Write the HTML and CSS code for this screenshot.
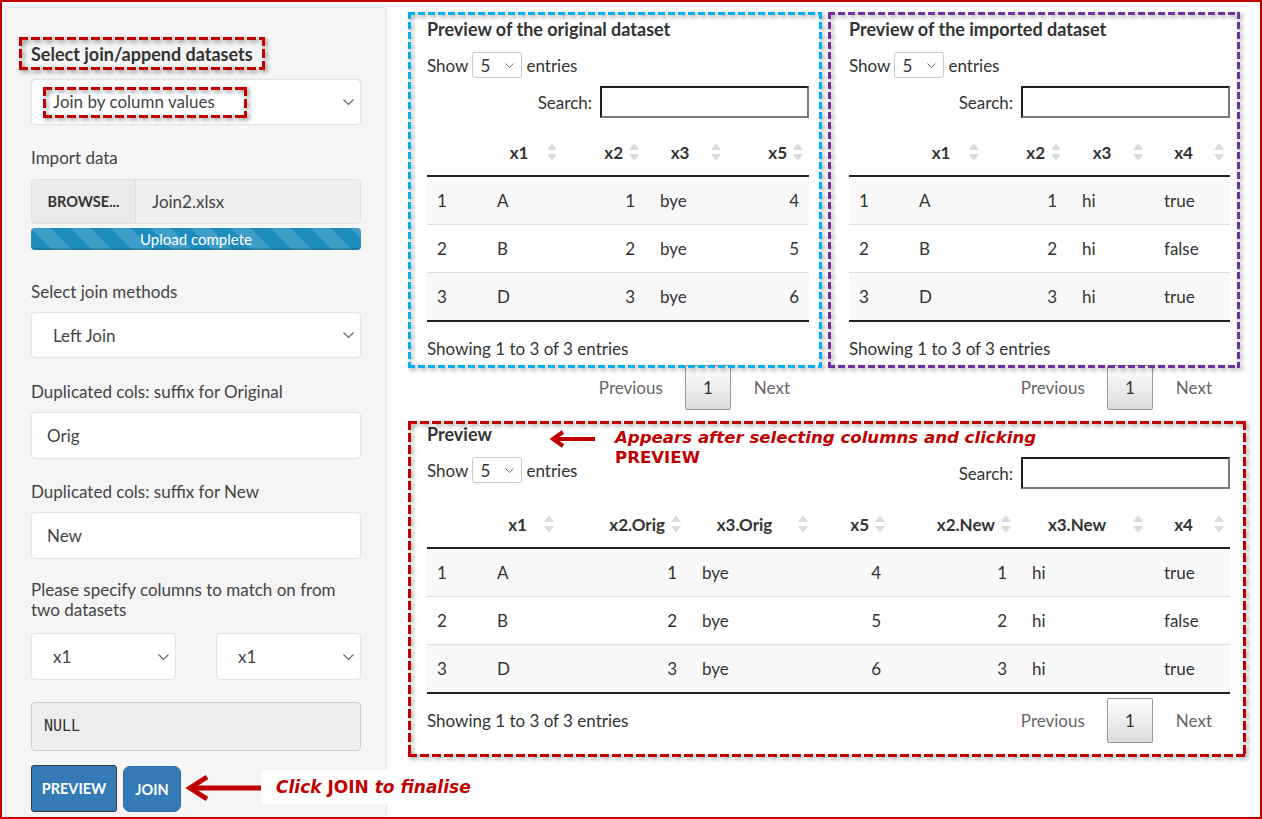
FILE: index.html
```html
<!DOCTYPE html>
<html>
<head>
<meta charset="utf-8">
<title>Join datasets</title>
<link rel="stylesheet" href="styles.css">
</head>
<body>
<div class="frame">
  <aside class="sidebar">
    <div class="title-label"><span class="anno-sm anno-label">Select join/append datasets</span></div>
    <div class="select sel-first"><span class="anno-sm anno-sel">Join by column values</span><svg class="chev" width="11" height="6" viewBox="0 0 11 6"><path d="M0.5 0.5 L5.5 5.5 L10.5 0.5" fill="none" stroke="#666" stroke-width="1.1"/></svg></div>
    <div class="lbl lbl-import">Import data</div>
    <div class="file"><span class="browse">BROWSE...</span><span class="fname">Join2.xlsx</span></div>
    <div class="progress">Upload complete</div>
    <div class="lbl lbl-method">Select join methods</div>
    <div class="select"><span>Left Join</span><svg class="chev" width="11" height="6" viewBox="0 0 11 6"><path d="M0.5 0.5 L5.5 5.5 L10.5 0.5" fill="none" stroke="#666" stroke-width="1.1"/></svg></div>
    <div class="lbl lbl-dup">Duplicated cols: suffix for Original</div>
    <div class="input">Orig</div>
    <div class="lbl lbl-dup2">Duplicated cols: suffix for New</div>
    <div class="input">New</div>
    <div class="lbl lbl-two">Please specify columns to match on from two datasets</div>
    <div class="pair">
      <div class="select small"><span>x1</span><svg class="chev" width="11" height="6" viewBox="0 0 11 6"><path d="M0.5 0.5 L5.5 5.5 L10.5 0.5" fill="none" stroke="#666" stroke-width="1.1"/></svg></div>
      <div class="select small"><span>x1</span><svg class="chev" width="11" height="6" viewBox="0 0 11 6"><path d="M0.5 0.5 L5.5 5.5 L10.5 0.5" fill="none" stroke="#666" stroke-width="1.1"/></svg></div>
    </div>
    <pre class="null">NULL</pre>
    <div class="buttons"><button class="btn btn-preview">PREVIEW</button><button class="btn btn-join">JOIN</button></div>
  </aside>

  <main class="main">
    <div class="top-row">
      <div class="col col1">
        <div class="box dash-blue box1">
          <div class="dt-title">Preview of the original dataset</div>
          <div class="show">Show <span class="len">5<svg class="chev-s" width="9" height="5" viewBox="0 0 9 5"><path d="M0.5 0.5 L4.5 4.5 L8.5 0.5" fill="none" stroke="#777" stroke-width="1"/></svg></span> entries</div>
          <div class="search">Search: <span class="search-input"></span></div>
          <table class="dt">
            <colgroup><col style="width:60px"><col style="width:76px"><col style="width:82px"><col style="width:82px"><col style="width:82px"></colgroup>
            <thead><tr><th class="rn"></th><th>x1<i class="sort"><svg width="10" height="18" viewBox="0 0 10 18"><path d="M0 7 L5 0 L10 7Z M0 11 L5 18 L10 11Z" fill="#dcdcdc"/></svg></i></th><th class="r">x2<i class="sort"><svg width="10" height="18" viewBox="0 0 10 18"><path d="M0 7 L5 0 L10 7Z M0 11 L5 18 L10 11Z" fill="#dcdcdc"/></svg></i></th><th>x3<i class="sort"><svg width="10" height="18" viewBox="0 0 10 18"><path d="M0 7 L5 0 L10 7Z M0 11 L5 18 L10 11Z" fill="#dcdcdc"/></svg></i></th><th class="r">x5<i class="sort"><svg width="10" height="18" viewBox="0 0 10 18"><path d="M0 7 L5 0 L10 7Z M0 11 L5 18 L10 11Z" fill="#dcdcdc"/></svg></i></th></tr></thead>
            <tbody>
              <tr><td class="c0">1</td><td class="c1">A</td><td class="r">1</td><td>bye</td><td class="r">4</td></tr>
              <tr><td class="c0">2</td><td class="c1">B</td><td class="r">2</td><td>bye</td><td class="r">5</td></tr>
              <tr><td class="c0">3</td><td class="c1">D</td><td class="r">3</td><td>bye</td><td class="r">6</td></tr>
            </tbody>
          </table>
          <div class="info">Showing 1 to 3 of 3 entries</div>
        </div>
        <div class="pager pager1"><span class="pg-prev">Previous</span><span class="pg-btn">1</span><span class="pg-next">Next</span></div>
      </div>
      <div class="col col2">
        <div class="box dash-purple box2">
          <div class="dt-title">Preview of the imported dataset</div>
          <div class="show">Show <span class="len">5<svg class="chev-s" width="9" height="5" viewBox="0 0 9 5"><path d="M0.5 0.5 L4.5 4.5 L8.5 0.5" fill="none" stroke="#777" stroke-width="1"/></svg></span> entries</div>
          <div class="search">Search: <span class="search-input"></span></div>
          <table class="dt">
            <colgroup><col style="width:60px"><col style="width:76px"><col style="width:82px"><col style="width:82px"><col style="width:81px"></colgroup>
            <thead><tr><th class="rn"></th><th>x1<i class="sort"><svg width="10" height="18" viewBox="0 0 10 18"><path d="M0 7 L5 0 L10 7Z M0 11 L5 18 L10 11Z" fill="#dcdcdc"/></svg></i></th><th class="r">x2<i class="sort"><svg width="10" height="18" viewBox="0 0 10 18"><path d="M0 7 L5 0 L10 7Z M0 11 L5 18 L10 11Z" fill="#dcdcdc"/></svg></i></th><th>x3<i class="sort"><svg width="10" height="18" viewBox="0 0 10 18"><path d="M0 7 L5 0 L10 7Z M0 11 L5 18 L10 11Z" fill="#dcdcdc"/></svg></i></th><th>x4<i class="sort"><svg width="10" height="18" viewBox="0 0 10 18"><path d="M0 7 L5 0 L10 7Z M0 11 L5 18 L10 11Z" fill="#dcdcdc"/></svg></i></th></tr></thead>
            <tbody>
              <tr><td class="c0">1</td><td class="c1">A</td><td class="r">1</td><td>hi</td><td>true</td></tr>
              <tr><td class="c0">2</td><td class="c1">B</td><td class="r">2</td><td>hi</td><td>false</td></tr>
              <tr><td class="c0">3</td><td class="c1">D</td><td class="r">3</td><td>hi</td><td>true</td></tr>
            </tbody>
          </table>
          <div class="info">Showing 1 to 3 of 3 entries</div>
        </div>
        <div class="pager pager2"><span class="pg-prev">Previous</span><span class="pg-btn">1</span><span class="pg-next">Next</span></div>
      </div>
    </div>

    <div class="box dash-red preview">
      <div class="dt-title">Preview</div>
      <svg class="note-arrow" width="46" height="18" viewBox="0 0 46 18"><path d="M4 9 H46" stroke="#c00000" stroke-width="4"/><path d="M14 2 L4 9 L14 16" fill="none" stroke="#c00000" stroke-width="4"/></svg>
      <div class="note note-preview">Appears after selecting columns and clicking<br><span class="up">PREVIEW</span></div>
      <div class="ctrl">
        <div class="show">Show <span class="len">5<svg class="chev-s" width="9" height="5" viewBox="0 0 9 5"><path d="M0.5 0.5 L4.5 4.5 L8.5 0.5" fill="none" stroke="#777" stroke-width="1"/></svg></span> entries</div>
        <div class="search">Search: <span class="search-input"></span></div>
      </div>
      <table class="dt dt-wide">
        <colgroup><col style="width:60px"><col style="width:73px"><col style="width:127px"><col style="width:127px"><col style="width:77px"><col style="width:126px"><col style="width:132px"><col style="width:81px"></colgroup>
        <thead><tr><th class="rn"></th><th>x1<i class="sort"><svg width="10" height="18" viewBox="0 0 10 18"><path d="M0 7 L5 0 L10 7Z M0 11 L5 18 L10 11Z" fill="#dcdcdc"/></svg></i></th><th class="r">x2.Orig<i class="sort"><svg width="10" height="18" viewBox="0 0 10 18"><path d="M0 7 L5 0 L10 7Z M0 11 L5 18 L10 11Z" fill="#dcdcdc"/></svg></i></th><th>x3.Orig<i class="sort"><svg width="10" height="18" viewBox="0 0 10 18"><path d="M0 7 L5 0 L10 7Z M0 11 L5 18 L10 11Z" fill="#dcdcdc"/></svg></i></th><th class="r">x5<i class="sort"><svg width="10" height="18" viewBox="0 0 10 18"><path d="M0 7 L5 0 L10 7Z M0 11 L5 18 L10 11Z" fill="#dcdcdc"/></svg></i></th><th class="r">x2.New<i class="sort"><svg width="10" height="18" viewBox="0 0 10 18"><path d="M0 7 L5 0 L10 7Z M0 11 L5 18 L10 11Z" fill="#dcdcdc"/></svg></i></th><th>x3.New<i class="sort"><svg width="10" height="18" viewBox="0 0 10 18"><path d="M0 7 L5 0 L10 7Z M0 11 L5 18 L10 11Z" fill="#dcdcdc"/></svg></i></th><th>x4<i class="sort"><svg width="10" height="18" viewBox="0 0 10 18"><path d="M0 7 L5 0 L10 7Z M0 11 L5 18 L10 11Z" fill="#dcdcdc"/></svg></i></th></tr></thead>
        <tbody>
          <tr><td class="c0">1</td><td class="c1">A</td><td class="r">1</td><td>bye</td><td class="r">4</td><td class="r">1</td><td>hi</td><td>true</td></tr>
          <tr><td class="c0">2</td><td class="c1">B</td><td class="r">2</td><td>bye</td><td class="r">5</td><td class="r">2</td><td>hi</td><td>false</td></tr>
          <tr><td class="c0">3</td><td class="c1">D</td><td class="r">3</td><td>bye</td><td class="r">6</td><td class="r">3</td><td>hi</td><td>true</td></tr>
        </tbody>
      </table>
      <div class="foot">
        <div class="info-inline">Showing 1 to 3 of 3 entries</div>
        <div class="pager pager3"><span class="pg-prev">Previous</span><span class="pg-btn">1</span><span class="pg-next">Next</span></div>
      </div>
    </div>
  </main>

  <svg class="join-arrow" width="78" height="28" viewBox="0 0 78 28"><path d="M5 14 H78" stroke="#c00000" stroke-width="5"/><path d="M22 3 L5 14 L22 25" fill="none" stroke="#c00000" stroke-width="5"/></svg>
  <div class="note note-join"><i>Click</i> JOIN <i>to finalise</i></div>
</div>
</body>
</html>
```

FILE: styles.css
```css
* { box-sizing: border-box; }
html, body { margin: 0; padding: 0; background: #fff; }
body {
  font-family: Lato, "Open Sans", "Liberation Sans", sans-serif;
  font-size: 17px;
  color: #333;
}

.frame {
  position: relative;
  width: 1262px;
  height: 819px;
  border: 2px solid #c00000;
  overflow: hidden;
  display: flex;
  align-items: flex-start;
  background: #fff;
}

/* ---------- sidebar ---------- */
.sidebar {
  flex: none;
  width: 382px;
  height: 840px;
  margin: 5px 0 0 3px;
  background: #f5f5f5;
  border: 1px solid #e3e3e3;
  border-radius: 4px;
  padding: 36px 25px 0 25px;
}

.title-label { font-weight: 700; font-size: 18px; line-height: 20px; color: #333; }

.anno-sm { position: relative; display: inline-block; }
.anno-sm::before {
  content: "";
  position: absolute;
  --c: #c00000;
  background:
    linear-gradient(90deg, var(--c) 9px, transparent 9px) 0 0 / 12px 3px repeat-x,
    linear-gradient(90deg, var(--c) 9px, transparent 9px) 0 100% / 12px 3px repeat-x,
    linear-gradient(180deg, var(--c) 9px, transparent 9px) 0 0 / 3px 12px repeat-y,
    linear-gradient(180deg, var(--c) 9px, transparent 9px) 100% 0 / 3px 12px repeat-y;
  filter: drop-shadow(2px 2px 2px rgba(0, 0, 0, 0.45));
  pointer-events: none;
}
.anno-label::before { left: -12px; right: -12px; top: -7px; bottom: -6px; }
.anno-sel { line-height: 20px; }
.anno-sel::before { left: -10px; right: -32px; top: -5px; bottom: -6px; }

.select {
  position: relative;
  display: flex;
  align-items: center;
  height: 46px;
  background: #fff;
  border: 1px solid #e4e4e4;
  border-radius: 4px;
  padding-left: 21px;
  color: #444;
  box-shadow: 0 0 2px rgba(0, 0, 0, 0.06);
}
.sel-first { margin-top: 15px; }
.chev { margin-left: auto; margin-right: 6px; flex: none; }

.lbl { line-height: 20px; color: #444; margin-bottom: 10px; }
.lbl-import { margin-top: 23px; margin-bottom: 11px; }
.lbl-method { margin-top: 32px; }
.lbl-dup { margin-top: 24px; }
.lbl-dup2 { margin-top: 23px; }
.lbl-two { margin-top: 21px; margin-bottom: 13px; }

.file {
  display: flex;
  height: 45px;
  border: 1px solid #e0e0e0;
  border-radius: 4px;
  background: #efefef;
  overflow: hidden;
}
.browse {
  flex: none;
  width: 104px;
  display: flex;
  align-items: center;
  justify-content: center;
  background: #ebebeb;
  border-right: 1px solid #dedede;
  font-weight: 700;
  font-size: 14.5px;
  color: #333;
}
.fname { display: flex; align-items: center; padding-left: 16px; color: #444; }

.progress {
  margin-top: 4px;
  height: 22px;
  border-radius: 4px;
  background-color: #1d8dbf;
  background-image: linear-gradient(45deg, rgba(255,255,255,.15) 25%, transparent 25%, transparent 50%, rgba(255,255,255,.15) 50%, rgba(255,255,255,.15) 75%, transparent 75%, transparent);
  background-size: 40px 40px;
  box-shadow: inset 0 -2px 0 rgba(0, 0, 0, 0.15);
  color: #fff;
  font-size: 15px;
  line-height: 22px;
  text-align: center;
}

.input {
  display: flex;
  align-items: center;
  height: 47px;
  background: #fff;
  border: 1px solid #e4e4e4;
  border-radius: 4px;
  padding-left: 15px;
  color: #444;
  box-shadow: 0 0 2px rgba(0, 0, 0, 0.06);
}

.pair { display: flex; justify-content: space-between; }
.select.small { width: 145px; height: 47px; }

.null {
  margin: 22px 0 0;
  height: 49px;
  background: #eee;
  border: 1px solid #ccc;
  border-radius: 4px;
  padding: 0 12px;
  font-family: "DejaVu Sans Mono", "Liberation Mono", monospace;
  font-size: 15px;
  line-height: 47px;
  color: #333;
}

.buttons { display: flex; gap: 6px; margin-top: 14px; align-items: flex-end; }
.btn {
  height: 46px;
  background: #337ab7;
  color: #fff;
  border: 1px solid #2e6da4;
  border-radius: 7px;
  font-family: inherit;
  font-weight: 700;
  font-size: 14.5px;
  padding: 0;
}
.btn-preview { width: 86px; height: 47px; border: 1px solid #3a3a3a; border-radius: 3px; }
.btn-join { width: 58px; }

/* ---------- main ---------- */
.main { flex: none; width: 838px; margin: 10px 0 0 21px; }
.top-row { display: flex; gap: 6px; }
.col1 { width: 414px; }
.col2 { width: 412px; }

.box { position: relative; }
.box::before {
  content: "";
  position: absolute;
  inset: 0;
  background:
    linear-gradient(90deg, var(--c) var(--d), transparent var(--d)) 0 0 / var(--p) 3px repeat-x,
    linear-gradient(90deg, var(--c) var(--d), transparent var(--d)) 0 100% / var(--p) 3px repeat-x,
    linear-gradient(180deg, var(--c) var(--d), transparent var(--d)) 0 0 / 3px var(--p) repeat-y,
    linear-gradient(180deg, var(--c) var(--d), transparent var(--d)) 100% 0 / 3px var(--p) repeat-y;
  filter: drop-shadow(2px 2px 2px rgba(0, 0, 0, 0.4));
  pointer-events: none;
  z-index: 2;
}
.dash-blue { --c: #00b0f0; --d: 7px; --p: 10px; }
.dash-purple { --c: #7030a0; --d: 7px; --p: 10px; }
.dash-red { --c: #c00000; --d: 9px; --p: 12px; }

.box1 { padding: 6px 13px 7px 19px; }
.box2 { padding: 6px 10px 7px 21px; }

.dt-title { font-weight: 700; font-size: 18px; line-height: 22px; color: #333; }

.show { display: flex; align-items: center; gap: 4px; height: 26px; margin-top: 12px; color: #333; }
.len {
  display: flex;
  align-items: center;
  width: 50px;
  height: 26px;
  background: #fff;
  border: 1px solid #c8c8c8;
  border-radius: 3px;
  padding-left: 7px;
}
.chev-s { margin-left: auto; margin-right: 7px; }

.search { display: flex; justify-content: flex-end; align-items: center; gap: 8px; height: 32px; margin-top: 8px; }
.search-input {
  display: block;
  width: 209px;
  height: 32px;
  background: #fff;
  border: 2px solid;
  border-color: #1e1e1e #7a7a7a #7a7a7a #1e1e1e;
}

.dt {
  width: 100%;
  table-layout: fixed;
  border-collapse: separate;
  border-spacing: 0;
  margin-top: 12px;
  color: #333;
}
.dt th {
  position: relative;
  font-weight: 700;
  padding: 10px 22px 10px 10px;
  line-height: 25px;
  border-bottom: 2px solid #222;
  text-align: center;
  white-space: nowrap;
}
.dt th.r { text-align: right; }
.sort { position: absolute; right: 6px; top: 50%; margin-top: -10px; line-height: 0; }
.dt td {
  padding: 11.5px 10px 11.5px 15px;
  line-height: 24px;
  border-top: 1px solid #ddd;
  text-align: left;
  white-space: nowrap;
}
.dt tbody tr:first-child td { border-top: none; }
.dt tbody tr:nth-child(odd) { background: #f9f9f9; }
.dt tbody tr:last-child td { border-bottom: 2px solid #222; }
.dt td.r { text-align: right; }
.dt td.c0, .dt td.c1 { padding-left: 10px; }

.info { margin-top: 15px; line-height: 24px; }

.pager { display: flex; justify-content: flex-end; align-items: center; height: 45px; color: #666; }
.pager1 { margin-top: -3px; padding-right: 13px; }
.pager2 { margin-top: -3px; padding-right: 9px; }
.pg-prev { padding: 0 22px; }
.pg-btn {
  display: flex;
  align-items: center;
  justify-content: center;
  width: 46px;
  height: 45px;
  border: 1px solid #979797;
  border-radius: 2px;
  background: linear-gradient(#fff, #dcdcdc);
  color: #333;
}
.pg-next { padding: 0 19px 0 23px; }

.preview { margin-top: 11px; padding: 2px 16px 14px 19px; }
.ctrl { display: flex; justify-content: space-between; align-items: flex-start; margin-top: 12px; }
.ctrl .show, .ctrl .search { margin-top: 0; }
.dt-wide { margin-top: 13px; }
.foot { display: flex; justify-content: space-between; align-items: center; margin-top: 4px; height: 45px; }
.pager3 { padding-right: 0; margin-right: -1px; }

.note {
  position: absolute;
  color: #c00000;
  font-family: "DejaVu Sans", Verdana, sans-serif;
  font-weight: 700;
  font-size: 17px;
  line-height: 20px;
  white-space: nowrap;
}
.note-preview { left: 207px; top: 7px; font-style: italic; font-size: 16.6px; }
.note-preview .up { font-style: normal; }
.note-arrow { position: absolute; left: 141px; top: 9px; }

.join-arrow { position: absolute; left: 183px; top: 772px; }
.note-join { left: 259px; top: 768px; height: 34px; line-height: 34px; padding: 0 15px; background: #fff; }
.note-join i { font-style: italic; }
```
